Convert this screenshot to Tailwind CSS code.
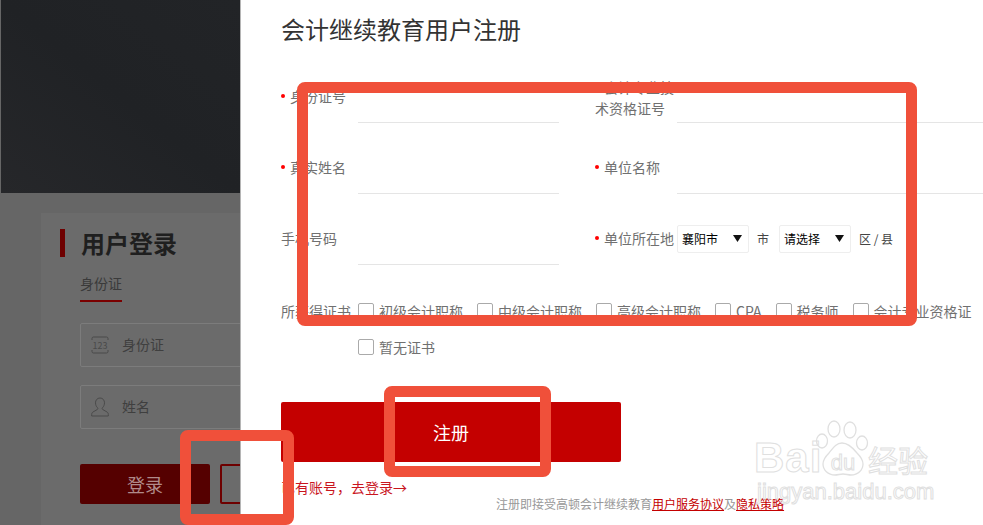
<!DOCTYPE html>
<html lang="zh-CN">
  <head>
    <meta charset="UTF-8" />
    <meta name="viewport" content="width=device-width, initial-scale=1.0" />
    <title>会计继续教育用户注册</title>
    <script src="https://cdn.jsdelivr.net/npm/@tailwindcss/browser@4"></script>
  </head>
  <body class="relative w-[983px] h-[525px] overflow-hidden bg-white flex font-['Noto_Sans_CJK_SC','Liberation_Sans',sans-serif]">
    <!-- login page behind the overlay -->
    <aside class="w-[241px] h-[525px] shrink-0 overflow-hidden flex flex-col bg-[#666666] border-r border-[#b5b5b5]">
      <div class="h-[193px] shrink-0 border-l border-[#666666] bg-linear-to-tr from-[#26272a] via-[#202225] to-[#222427]"></div>
      <div class="mt-[20px] ml-[41px] flex-1 bg-[#6b6b6b] pl-[19px] pt-[16px] w-[260px]">
        <div class="flex items-center h-[28px]">
          <span class="w-[5px] h-[28px] bg-[#6e0000]"></span>
          <h2 class="ml-[16px] text-[24px] leading-[26px] font-bold text-[#1f1f1f]">用户登录</h2>
        </div>
        <div class="ml-[20px] mt-[15px] w-[42px] h-[30px] border-b-2 border-[#7a0000] text-[14px] leading-[22px] text-[#3a3a3a]">身份证</div>
        <div class="ml-[20px] mt-[21px] w-[240px] h-[44px] border border-[#7c7c7c] rounded-[2px] flex items-center pl-[10px]">
          <svg width="18" height="18" viewBox="0 0 18 18" fill="none" stroke="#4a4a4a" stroke-width="1">
            <path d="M1 4V2.500A1.500 1.500 0 0 1 2.500 1h13A1.500 1.500 0 0 1 17 2.500V4M1 14v1.500A1.500 1.500 0 0 0 2.500 17h13a1.500 1.500 0 0 0 1.500-1.500V14" />
            <text x="9" y="12.500" text-anchor="middle" font-size="9" fill="#4a4a4a" stroke="none">123</text>
          </svg>
          <span class="ml-[13px] mb-[2px] text-[14px] text-[#3f3f3f]">身份证</span>
        </div>
        <div class="ml-[20px] mt-[18px] w-[240px] h-[44px] border border-[#7c7c7c] rounded-[2px] flex items-center pl-[10px]">
          <svg width="18" height="20" viewBox="0 0 18 20" fill="none" stroke="#4a4a4a" stroke-width="1">
            <path d="M9 1c-2.800 0-4.500 2.200-4.500 4.800 0 2 .8 3.800 2 4.900.5.500.4 1.400-.2 1.800L2 15c-1 .6-1.300 1.500-1.300 2.400V19h16.600v-1.600c0-.9-.3-1.800-1.300-2.400l-4.300-2.500c-.6-.4-.7-1.300-.2-1.800 1.200-1.100 2-2.900 2-4.900C13.500 3.200 11.800 1 9 1z" />
          </svg>
          <span class="ml-[13px] mb-[2px] text-[14px] text-[#3f3f3f]">姓名</span>
        </div>
        <div class="ml-[20px] mt-[35px] flex gap-[10px]">
          <button class="w-[130px] h-[40px] shrink-0 bg-[#550000] rounded-[2px] text-[18px] text-[#b08a8a]">登录</button>
          <button class="w-[100px] h-[40px] shrink-0 border-2 border-[#6e0000] rounded-[2px]"></button>
        </div>
      </div>
    </aside>

    <!-- register dialog -->
    <main class="flex-1 pl-[40px] text-[14px] text-[#707070]">
      <h1 class="h-[60px] text-[24px] leading-[58px] text-[#333333]">会计继续教育用户注册</h1>
      <div class="mt-[13px] grid grid-cols-[278px_1fr] gap-x-[36px] gap-y-[21px]">
        <div class="flex items-center h-[50px]">
          <label class="w-[77px] mb-[4px] flex items-center"><i class="w-[4px] h-[4px] rounded-full bg-[#ff0000] mr-[5px]"></i>身份证号</label>
          <div class="flex-1 h-[50px] border-b border-[#e5e5e5]"></div>
        </div>
        <div class="flex items-center h-[50px]">
          <label class="w-[82px] leading-[21px]"><i class="inline-block align-middle w-[4px] h-[4px] rounded-full bg-[#ff0000] mr-[5px]"></i>会计专业技术资格证号</label>
          <div class="flex-1 h-[50px] border-b border-[#e5e5e5]"></div>
        </div>
        <div class="flex items-center h-[50px]">
          <label class="w-[77px] mb-[4px] flex items-center"><i class="w-[4px] h-[4px] rounded-full bg-[#ff0000] mr-[5px]"></i>真实姓名</label>
          <div class="flex-1 h-[50px] border-b border-[#e5e5e5]"></div>
        </div>
        <div class="flex items-center h-[50px]">
          <label class="w-[82px] mb-[4px] flex items-center"><i class="w-[4px] h-[4px] rounded-full bg-[#ff0000] mr-[5px]"></i>单位名称</label>
          <div class="flex-1 h-[50px] border-b border-[#e5e5e5]"></div>
        </div>
        <div class="flex items-center h-[50px]">
          <label class="w-[77px] mb-[4px]">手机号码</label>
          <div class="flex-1 h-[50px] border-b border-[#e5e5e5]"></div>
        </div>
        <div class="flex items-center h-[50px] pb-[2px]">
          <label class="w-[82px] mb-[2px] flex items-center whitespace-nowrap"><i class="w-[4px] h-[4px] rounded-full bg-[#ff0000] mr-[5px]"></i>单位所在地</label>
          <div class="relative w-[72px] h-[28px]">
            <select class="appearance-none w-full h-full pl-[4px] border border-[#eeeeee] rounded-[2px] bg-white text-[12px] text-black">
              <option>襄阳市</option>
            </select>
            <svg class="absolute right-[7px] top-[10px]" width="9" height="7" viewBox="0 0 9 7"><path d="M0 0h9L4.500 7z" fill="#111111" /></svg>
          </div>
          <span class="ml-[8px] mr-[10px] text-[12px] text-[#444444]">市</span>
          <div class="relative w-[72px] h-[28px]">
            <select class="appearance-none w-full h-full pl-[4px] border border-[#eeeeee] rounded-[2px] bg-white text-[12px] text-black">
              <option>请选择</option>
            </select>
            <svg class="absolute right-[7px] top-[10px]" width="9" height="7" viewBox="0 0 9 7"><path d="M0 0h9L4.500 7z" fill="#111111" /></svg>
          </div>
          <span class="ml-[8px] text-[12px] text-[#444444]">区 / 县</span>
        </div>
      </div>

      <div class="mt-[30px] flex">
        <label class="w-[77px] shrink-0 leading-[32px] whitespace-nowrap">所获得证书</label>
        <div class="flex flex-wrap gap-x-[14px] w-[625px] shrink-0">
          <label class="h-[36px] flex items-center gap-[5px] pb-[4px]"><input type="checkbox" class="appearance-none w-[16px] h-[16px] border border-[#aaaaaa] rounded-[2px]" />初级会计职称</label>
          <label class="h-[36px] flex items-center gap-[5px] pb-[4px]"><input type="checkbox" class="appearance-none w-[16px] h-[16px] border border-[#aaaaaa] rounded-[2px]" />中级会计职称</label>
          <label class="h-[36px] flex items-center gap-[5px] pb-[4px]"><input type="checkbox" class="appearance-none w-[16px] h-[16px] border border-[#aaaaaa] rounded-[2px]" />高级会计职称</label>
          <label class="h-[36px] flex items-center gap-[5px] pb-[4px]"><input type="checkbox" class="appearance-none w-[16px] h-[16px] border border-[#aaaaaa] rounded-[2px]" />CPA</label>
          <label class="h-[36px] flex items-center gap-[5px] pb-[4px]"><input type="checkbox" class="appearance-none w-[16px] h-[16px] border border-[#aaaaaa] rounded-[2px]" />税务师</label>
          <label class="h-[36px] flex items-center gap-[5px] pb-[4px]"><input type="checkbox" class="appearance-none w-[16px] h-[16px] border border-[#aaaaaa] rounded-[2px]" />会计专业资格证</label>
          <label class="h-[36px] flex items-center gap-[5px] pb-[4px]"><input type="checkbox" class="appearance-none w-[16px] h-[16px] border border-[#aaaaaa] rounded-[2px]" />暂无证书</label>
        </div>
      </div>

      <button class="mt-[35px] block w-[340px] h-[60px] bg-[#c40000] rounded-[2px] text-[18px] text-white">注册</button>
      <a class="mt-[15px] block text-[14px] leading-[20px] text-[#c9151e]">已有账号，去登录→</a>
      <p class="mt-[-2px] ml-[215px] text-[12px] leading-[18px] text-[#999999]">注册即接受高顿会计继续教育<a class="text-[#c40000] underline">用户服务协议</a>及<a class="text-[#c40000] underline">隐私策略</a></p>
    </main>

    <!-- red annotation frames drawn on the screenshot -->
    <div class="absolute left-[297px] top-[82px] w-[620px] h-[244px] border-[11px] border-[#f0503a] rounded-[8px]"></div>
    <div class="absolute left-[384px] top-[386px] w-[167px] h-[91px] border-[11px] border-[#f0503a] rounded-[8px]"></div>
    <div class="absolute left-[180px] top-[430px] w-[114px] h-[95px] border-[11px] border-[#f0503a] rounded-[8px]"></div>

    <!-- watermark -->
    <div class="absolute left-[754px] top-[418px] w-[180px] h-[84px] text-transparent [-webkit-text-stroke:1px_#e0e0e0] font-['Liberation_Sans',sans-serif]">
      <span class="absolute left-0 top-[18px] text-[42px] leading-[44px] font-bold tracking-[1px]">Bai</span>
      <svg class="absolute left-[61px] top-[2px]" width="56" height="58" viewBox="0 0 56 58" fill="none" stroke="#e0e0e0" stroke-width="1.300">
        <ellipse cx="7" cy="21" rx="5.500" ry="7" />
        <ellipse cx="19" cy="9" rx="6" ry="8" />
        <ellipse cx="35" cy="10" rx="6" ry="8" />
        <ellipse cx="47" cy="23" rx="5.500" ry="7" />
        <path d="M27 23c-6 0-9 5-13 10-3 3-6 6-6 11 0 6 5 11 12 11 3 0 5-1 8-1s5 1 8 1c7 0 12-5 12-11 0-5-3-8-6-11-4-5-9-10-15-10z" />
      </svg>
      <span class="absolute left-[69px] top-[33px] w-[40px] text-center text-[22px] leading-[24px]">du</span>
      <span class="absolute left-[114px] top-[24px] text-[30px] leading-[34px] font-['Noto_Sans_CJK_SC',sans-serif]">经验</span>
      <span class="absolute left-[3px] top-[61px] text-[22px] leading-[26px] whitespace-nowrap">jingyan.baidu.com</span>
    </div>
  </body>
</html>
